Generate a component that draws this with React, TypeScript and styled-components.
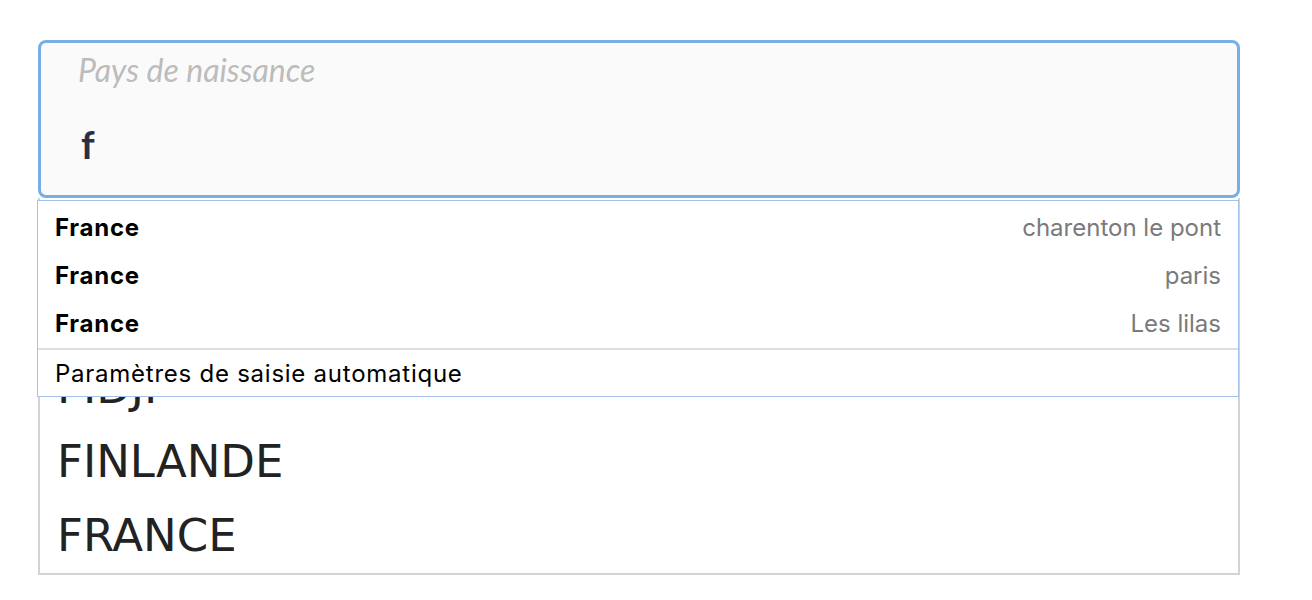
import React from "react";
import styled, { createGlobalStyle } from "styled-components";

const GlobalStyle = createGlobalStyle`
  html, body {
    margin: 0;
    padding: 0;
    background: #ffffff;
  }
  * {
    box-sizing: border-box;
  }
`;

const Page = styled.div`
  padding: 40px 72px 0 38px;
  width: 1312px;
  height: 600px;
  overflow: hidden;
`;

const Field = styled.div`
  position: relative;
  width: 1202px;
`;

const InputBox = styled.div`
  height: 158px;
  border: 3px solid #78aee3;
  border-radius: 8px;
  background: #fafafa;
  padding: 8px 37px 0 37px;
  display: flex;
  flex-direction: column;
`;

const Label = styled.label`
  font-family: Lato, "Open Sans", sans-serif;
  font-style: italic;
  font-size: 32px;
  line-height: 1.2;
  color: #bcbcbc;
`;

const Value = styled.div`
  margin-top: 33px;
  padding-left: 3px;
  font-family: Lato, "Open Sans", sans-serif;
  font-weight: 700;
  font-size: 38px;
  line-height: 1.2;
  color: #2b2f45;
`;

const OptionList = styled.ul`
  list-style: none;
  margin: 0;
  padding: 5px 17px 0;
  border: 2px solid #d3d3d3;
  border-top: none;
`;

const OptionItem = styled.li`
  font-family: "DejaVu Sans", Verdana, sans-serif;
  font-size: 45px;
  line-height: 74px;
  color: #222222;
  white-space: nowrap;
`;

const Popup = styled.div`
  position: absolute;
  top: 160px;
  left: -1px;
  width: 1202px;
  background: #ffffff;
  border: 1px solid #a3c2ea;
  padding-top: 3px;
  font-family: Inter, "Liberation Sans", Arial, sans-serif;
  font-size: 24px;
  letter-spacing: 0.75px;
`;

const Suggestion = styled.div`
  display: flex;
  justify-content: space-between;
  height: 48px;
  line-height: 48px;
  padding: 0 17px;
`;

const Country = styled.span`
  font-weight: 700;
  color: #000000;
`;

const City = styled.span`
  color: #7a7a7a;
  letter-spacing: 0;
`;

const Footer = styled.div`
  border-top: 2px solid #dedede;
  padding: 2px 17px 0;
  line-height: 44px;
  color: #000000;
`;

const countries = ["AFRIQUE DU SUD", "CENTRAFRIQUE", "FIDJI", "FINLANDE", "FRANCE"];

const suggestions = [
  { country: "France", city: "charenton le pont" },
  { country: "France", city: "paris" },
  { country: "France", city: "Les lilas" },
];

export default function App() {
  return (
    <>
      <GlobalStyle />
      <Page>
        <Field>
          <InputBox>
            <Label>Pays de naissance</Label>
            <Value>f</Value>
          </InputBox>
          <OptionList>
            {countries.map((c) => (
              <OptionItem key={c}>{c}</OptionItem>
            ))}
          </OptionList>
          <Popup>
            {suggestions.map((s) => (
              <Suggestion key={s.city}>
                <Country>{s.country}</Country>
                <City>{s.city}</City>
              </Suggestion>
            ))}
            <Footer>Paramètres de saisie automatique</Footer>
          </Popup>
        </Field>
      </Page>
    </>
  );
}
